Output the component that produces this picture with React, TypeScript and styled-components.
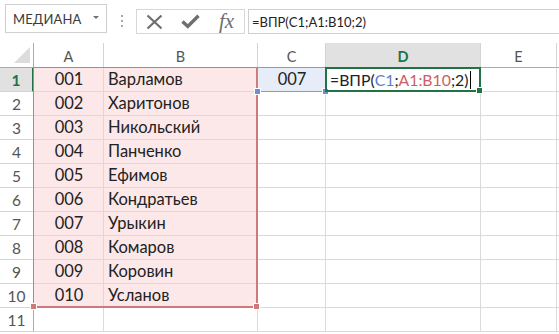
import React from 'react';
import styled, { createGlobalStyle } from 'styled-components';

const GlobalStyle = createGlobalStyle`
  html, body {
    margin: 0;
    padding: 0;
    background: #ffffff;
  }
  body {
    font-family: Lato, "Noto Sans", "Liberation Sans", sans-serif;
    overflow: hidden;
  }
`;

const Page = styled.div`
  width: 559px;
  height: 334px;
  overflow: hidden;
  background: #fff;
`;

const Toolbar = styled.div`
  height: 43px;
  display: flex;
  align-items: flex-start;
`;

const NameBox = styled.div`
  margin: 4px 0 0 5px;
  width: 102px;
  height: 29px;
  box-sizing: border-box;
  border: 1px solid #cfcfcf;
  display: flex;
  align-items: center;
  justify-content: space-between;
  padding: 0 7px 0 7px;
  font-size: 13px;
  color: #3a3a3a;
  letter-spacing: 0.2px;
`;

const DropArrow = styled.span`
  width: 0;
  height: 0;
  border-left: 3px solid transparent;
  border-right: 3px solid transparent;
  border-top: 3px solid #707070;
  margin-top: -2px;
`;

const Grip = styled.div`
  margin: 15px 0 0 14px;
  display: flex;
  flex-direction: column;
  gap: 3px;
`;

const GripDot = styled.span`
  width: 2px;
  height: 2px;
  background: #a8a8a8;
`;

const FuncBox = styled.div`
  margin: 9px 0 0 13px;
  width: 109px;
  height: 25px;
  box-sizing: border-box;
  border: 1px solid #d8d8d8;
  display: flex;
  align-items: center;
  padding-left: 9px;
  gap: 18px;
`;

const FxLabel = styled.span`
  font-family: "Liberation Serif", serif;
  font-style: italic;
  font-size: 21px;
  color: #6e6e6e;
  margin-left: 1px;
  line-height: 1;
`;

const FormulaBar = styled.div`
  margin: 9px 0 0 3px;
  flex: 1;
  height: 25px;
  box-sizing: border-box;
  border: 1px solid #cfcfcf;
  border-right: none;
  display: flex;
  align-items: center;
  padding-left: 3px;
  font-size: 13px;
  color: #222;
`;

const Sheet = styled.div`
  display: grid;
  grid-template-columns: 34px 70px 154px 68px 155px 76px 1fr;
  grid-template-rows: 25px repeat(11, 24px);
  font-size: 16.5px;
  color: #222;
`;

const Cell = styled.div<{ $r: number; $c: number; $align?: 'left' | 'center'; $fill?: string }>`
  grid-row: ${p => p.$r};
  grid-column: ${p => p.$c};
  box-sizing: border-box;
  border-right: 1px solid #dadada;
  border-bottom: 1px solid #dadada;
  background: ${p => p.$fill || 'transparent'};
  display: flex;
  align-items: flex-end;
  justify-content: ${p => (p.$align === 'left' ? 'flex-start' : 'center')};
  padding: 0 3px 2px 4px;
  white-space: nowrap;
  overflow: visible;
`;

const EditText = styled.span`
  font-size: 15.8px;
`;

const ColHead = styled.div<{ $c: number; $active?: boolean }>`
  grid-row: 1;
  grid-column: ${p => p.$c};
  box-sizing: border-box;
  border-right: 1px solid #d4d4d4;
  border-bottom: 1px solid #ababab;
  background: ${p => (p.$active ? '#e1e1e1' : '#fff')};
  color: ${p => (p.$active ? '#217346' : '#555')};
  font-weight: ${p => (p.$active ? 700 : 400)};
  font-size: 14.5px;
  display: flex;
  align-items: center;
  justify-content: center;
  padding-top: 2px;
`;

const RowHead = styled.div<{ $r: number; $active?: boolean }>`
  grid-row: ${p => p.$r};
  grid-column: 1;
  box-sizing: border-box;
  border-right: ${p => (p.$active ? '2px solid #217346' : '1px solid #ababab')};
  border-bottom: 1px solid #d4d4d4;
  background: ${p => (p.$active ? '#e1e1e1' : '#fff')};
  color: ${p => (p.$active ? '#217346' : '#555')};
  font-weight: ${p => (p.$active ? 700 : 400)};
  font-size: 15.5px;
  display: flex;
  align-items: flex-end;
  justify-content: center;
  padding-bottom: 2px;
`;

const Corner = styled.div`
  grid-row: 1;
  grid-column: 1;
  box-sizing: border-box;
  border-right: 1px solid #ababab;
  border-bottom: 1px solid #ababab;
  display: flex;
  align-items: flex-end;
  justify-content: flex-end;
  padding: 0 3px 4px 0;
`;

const CornerTriangle = styled.span`
  width: 16px;
  height: 16px;
  background: #dcdcdc;
  clip-path: polygon(100% 0, 100% 100%, 0 100%);
`;

const RangeFrame = styled.div<{ $row: string; $col: string; $color: string; $lt: number; $rb: number }>`
  grid-row: ${p => p.$row};
  grid-column: ${p => p.$col};
  position: relative;
  z-index: 2;
  margin: -1px 0 0 -1px;
  border-style: solid;
  border-color: ${p => p.$color};
  border-width: ${p => `${p.$lt}px ${p.$rb}px ${p.$rb}px ${p.$lt}px`};
  pointer-events: none;
`;

const Handle = styled.span<{ $color: string; $side: 'left' | 'right' }>`
  position: absolute;
  bottom: -4px;
  ${p => (p.$side === 'left' ? 'left: -4px;' : 'right: -4px;')}
  width: 5px;
  height: 5px;
  background: ${p => p.$color};
  border: 1px solid #fff;
`;

const Ref = styled.span<{ $color: string }>`
  color: ${p => p.$color};
`;

const Caret = styled.span`
  display: inline-block;
  width: 1px;
  height: 18px;
  background: #000;
  margin-left: 2px;
  vertical-align: -3px;
`;

const CrossIcon = () => (
  <svg width="17" height="16" viewBox="0 0 17 16">
    <path d="M1.5 1.5 L15.5 14.5 M15.5 1.5 L1.5 14.5" stroke="#6e6e6e" strokeWidth="2.2" fill="none" />
  </svg>
);

const CheckIcon = () => (
  <svg width="19" height="15" viewBox="0 0 19 15">
    <path d="M1.5 7.5 L6.8 12.5 L17.5 1.8" stroke="#6e6e6e" strokeWidth="3.4" fill="none" />
  </svg>
);

const names = [
  'Варламов',
  'Харитонов',
  'Никольский',
  'Панченко',
  'Ефимов',
  'Кондратьев',
  'Урыкин',
  'Комаров',
  'Коровин',
  'Усланов',
];

const columns = ['A', 'B', 'C', 'D', 'E', ''];

const PINK = '#fce8e8';
const BLUE = '#e6edf8';

const App: React.FC = () => {
  const rows = Array.from({ length: 11 }, (_, i) => i + 1);

  return (
    <Page>
      <GlobalStyle />
      <Toolbar>
        <NameBox>
          МЕДИАНА
          <DropArrow />
        </NameBox>
        <Grip>
          <GripDot />
          <GripDot />
          <GripDot />
        </Grip>
        <FuncBox>
          <CrossIcon />
          <CheckIcon />
          <FxLabel>fx</FxLabel>
        </FuncBox>
        <FormulaBar>=ВПР(C1;A1:B10;2)</FormulaBar>
      </Toolbar>

      <Sheet>
        <Corner>
          <CornerTriangle />
        </Corner>
        {columns.map((c, i) => (
          <ColHead key={i} $c={i + 2} $active={c === 'D'}>
            {c}
          </ColHead>
        ))}

        {rows.map(r => {
          const gr = r + 1;
          const inRange = r <= 10;
          return (
            <React.Fragment key={r}>
              <RowHead $r={gr} $active={r === 1}>
                {r}
              </RowHead>
              <Cell $r={gr} $c={2} $fill={inRange ? PINK : undefined}>
                {inRange ? String(r).padStart(3, '0') : ''}
              </Cell>
              <Cell $r={gr} $c={3} $align="left" $fill={inRange ? PINK : undefined}>
                {inRange ? names[r - 1] : ''}
              </Cell>
              <Cell $r={gr} $c={4} $fill={r === 1 ? BLUE : undefined}>
                {r === 1 ? '007' : ''}
              </Cell>
              <Cell $r={gr} $c={5} $align="left">
                {r === 1 && (
                  <EditText>
                    =ВПР(<Ref $color="#5b7ccc">C1</Ref>;<Ref $color="#cd5f63">A1:B10</Ref>;2)
                    <Caret />
                  </EditText>
                )}
              </Cell>
              <Cell $r={gr} $c={6} />
              <Cell $r={gr} $c={7} />
            </React.Fragment>
          );
        })}

        <RangeFrame $row="2 / 12" $col="2 / 4" $color="#cc7a7c" $lt={1} $rb={2}>
          <Handle $color="#cc7a7c" $side="left" />
          <Handle $color="#cc7a7c" $side="right" />
        </RangeFrame>
        <RangeFrame $row="2 / 3" $col="4 / 5" $color="#7f9bd3" $lt={1} $rb={1}>
          <Handle $color="#6f8fcf" $side="left" />
          <Handle $color="#6f8fcf" $side="right" />
        </RangeFrame>
        <RangeFrame $row="2 / 3" $col="5 / 6" $color="#217346" $lt={2} $rb={2}>
          <Handle $color="#217346" $side="right" />
        </RangeFrame>
      </Sheet>
    </Page>
  );
};

export default App;
